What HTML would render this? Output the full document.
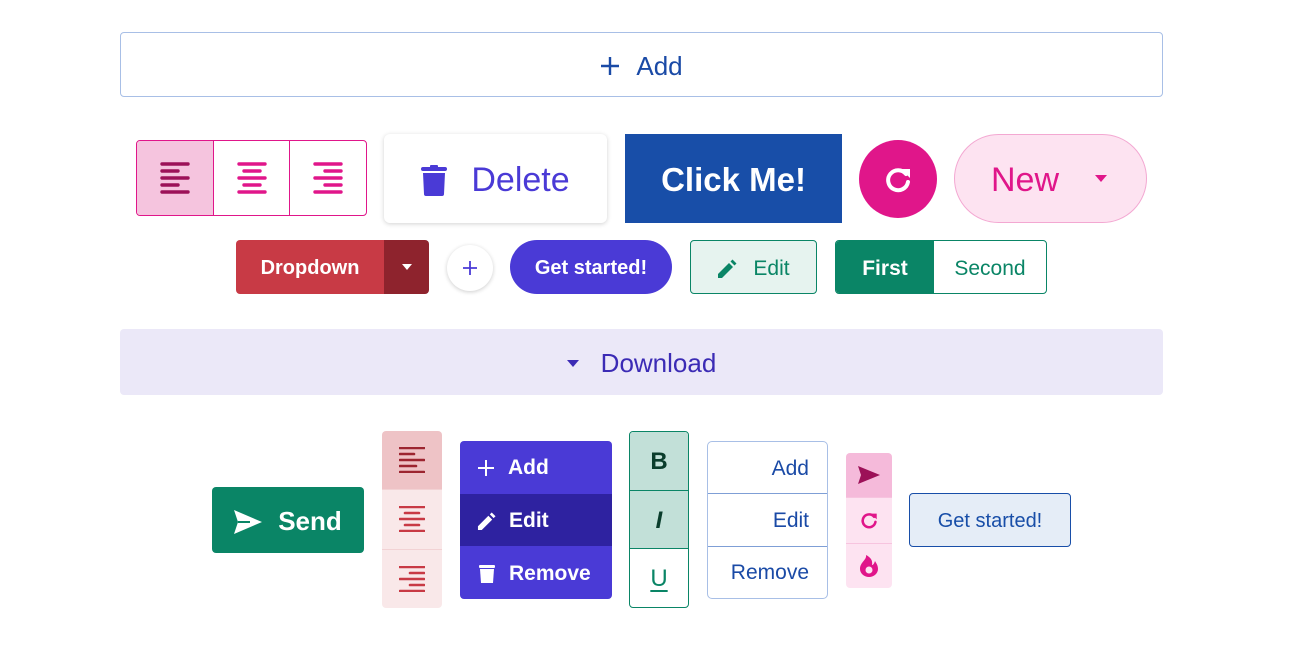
<!DOCTYPE html>
<html><head><meta charset="utf-8"><style>
*{box-sizing:border-box;margin:0;padding:0}
body{width:1300px;height:650px;background:#fff;font-family:"Segoe UI","Liberation Sans",sans-serif;position:relative;overflow:hidden}
.a{position:absolute;display:flex;align-items:center;justify-content:center;padding-top:3px}
.col{position:absolute;display:flex;flex-direction:column;overflow:hidden}
.col>div{flex:1;display:flex;align-items:center;justify-content:center;padding-top:2px}
.row{position:absolute;display:flex;overflow:hidden}
.row>div{display:flex;align-items:center;justify-content:center;padding-top:3px}
</style></head><body>

<div class="a" style="left:120px;top:32px;width:1043px;height:65px;border:1px solid #a8bfe6;border-radius:4px;color:#1a4aa6;font-size:26px;gap:16px">
<svg width="20" height="20" viewBox="0 0 20 20"><path d="M10 1v18M1 10h18" stroke="#1a4aa6" stroke-width="2.4"/></svg><span>Add</span></div>

<div class="row" style="left:136px;top:140px;width:231px;height:76px;border:1px solid #e0168a;border-radius:4px">
<div style="width:77px;background:#f5c4de;border-right:1px solid #e0168a;padding:0"><svg width="30" height="32" viewBox="0 0 30 32" stroke="#9c1158" stroke-width="3.4" stroke-linecap="round"><path d="M2 2h26M2 9h16M2 16h26M2 23h16M2 30h26"/></svg></div>
<div style="width:76px;border-right:1px solid #e0168a;padding:0"><svg width="30" height="32" viewBox="0 0 30 32" stroke="#e0168a" stroke-width="3.4" stroke-linecap="round"><path d="M2 2h26M7 9h16M2 16h26M7 23h16M2 30h26"/></svg></div>
<div style="flex:1;padding:0"><svg width="30" height="32" viewBox="0 0 30 32" stroke="#e0168a" stroke-width="3.4" stroke-linecap="round"><path d="M2 2h26M12 9h16M2 16h26M12 23h16M2 30h26"/></svg></div>
</div>

<div class="a" style="left:384px;top:134px;width:223px;height:89px;border-radius:6px;box-shadow:0 1px 5px rgba(0,0,0,.18);color:#4a3ad6;font-size:34px;gap:24px">
<svg width="26" height="31" viewBox="0 0 26 31"><rect x="0" y="2" width="26" height="4" rx="2" fill="#4a3ad6"/><rect x="9" y="0" width="8" height="4" rx="1" fill="#4a3ad6"/><path d="M2 8h22l-1 21a2 2 0 0 1-2 2H5a2 2 0 0 1-2-2z" fill="#4a3ad6"/></svg><span>Delete</span></div>

<div class="a" style="left:625px;top:134px;width:217px;height:89px;background:#184ea8;color:#fff;font-size:33px;font-weight:600">Click Me!</div>

<div class="a" style="left:859px;top:140px;width:78px;height:78px;border-radius:50%;background:#e0168a;padding:0">
<svg width="28" height="28" viewBox="0 0 28 28"><path d="M22 9A10 10 0 1 0 24 17" fill="none" stroke="#fff" stroke-width="4" stroke-linecap="round"/><path d="M17 4h9v9z" fill="#fff"/></svg></div>

<div class="a" style="left:954px;top:134px;width:193px;height:89px;border-radius:45px;background:#fde3f1;border:1px solid #f3a8d2;color:#e0168a;font-size:34px;justify-content:flex-start;padding-left:36px">New
<svg style="position:absolute;left:140px;top:40px" width="12" height="7" viewBox="0 0 12 7"><path d="M0 0h12L6 7z" fill="#e0168a"/></svg></div>

<div class="row" style="left:236px;top:240px;width:193px;height:54px;border-radius:4px;color:#fff;font-size:20px;font-weight:600">
<div style="width:148px;background:#c83a45">Dropdown</div><div style="flex:1;background:#8e232d;padding:0"><svg width="10" height="6" viewBox="0 0 10 6"><path d="M0 0h10L5 6z" fill="#fff"/></svg></div></div>

<div class="a" style="left:447px;top:245px;width:46px;height:46px;border-radius:50%;box-shadow:0 1px 4px rgba(0,0,0,.2);padding:0"><svg width="16" height="16" viewBox="0 0 16 16"><path d="M8 1v14M1 8h14" stroke="#4a3ad6" stroke-width="1.8"/></svg></div>

<div class="a" style="left:510px;top:240px;width:162px;height:54px;border-radius:27px;background:#4a3ad6;color:#fff;font-size:20px;font-weight:600">Get started!</div>

<div class="a" style="left:690px;top:240px;width:127px;height:54px;border-radius:4px;background:#e6f3ef;border:1px solid #0a8566;color:#0a8566;font-size:21px;gap:16px">
<svg width="20" height="20" viewBox="0 0 20 20"><path d="M1 15l11-11 4 4-11 11H1z M13.5 2.5l2-2 4 4-2 2z" fill="#0a8566"/></svg><span>Edit</span></div>

<div class="row" style="left:835px;top:240px;width:212px;height:54px;border-radius:4px;border:1px solid #0a8566;font-size:21px">
<div style="width:98px;background:#0a8566;color:#fff;font-weight:600">First</div><div style="flex:1;color:#0a8566">Second</div></div>

<div class="a" style="left:120px;top:329px;width:1043px;height:66px;border-radius:4px;background:#ebe8f8;color:#3b2bb5;font-size:26px;gap:22px">
<svg width="12" height="7" viewBox="0 0 12 7"><path d="M0 0h12L6 7z" fill="#3b2bb5"/></svg><span>Download</span></div>

<div class="a" style="left:212px;top:487px;width:152px;height:66px;border-radius:4px;background:#0a8566;color:#fff;font-size:26px;font-weight:600;gap:16px">
<svg width="28" height="24" viewBox="0 0 28 24"><path d="M0 0l28 12L0 24l4-12z" fill="#fff"/><path d="M4 12h12" stroke="#0a8566" stroke-width="2"/></svg><span>Send</span></div>

<div class="col" style="left:382px;top:431px;width:60px;height:177px;border-radius:4px">
<div style="background:#eec3c6;border-bottom:1px solid #f2d2d4;padding:0"><svg width="26" height="26" viewBox="0 0 26 26" stroke="#9c2530" stroke-width="2.6" stroke-linecap="round"><path d="M1 1h24M1 7h14M1 13h24M1 19h16M1 25h24"/></svg></div>
<div style="background:#f9e8e9;border-bottom:1px solid #f2d2d4;padding:0"><svg width="26" height="26" viewBox="0 0 26 26" stroke="#c83a45" stroke-width="2.6" stroke-linecap="round"><path d="M1 1h24M6 7h14M1 13h24M6 19h14M1 25h24"/></svg></div>
<div style="background:#f9e8e9;padding:0"><svg width="26" height="26" viewBox="0 0 26 26" stroke="#c83a45" stroke-width="2.6" stroke-linecap="round"><path d="M1 1h24M11 7h14M1 13h24M11 19h14M1 25h24"/></svg></div>
</div>

<div class="col" style="left:460px;top:441px;width:152px;height:158px;border-radius:4px;background:#4a3ad6;color:#fff;font-size:21px;font-weight:600">
<div style="justify-content:flex-start;padding-left:18px;gap:14px"><svg width="16" height="16" viewBox="0 0 16 16"><path d="M8 0v16M0 8h16" stroke="#fff" stroke-width="2"/></svg>Add</div>
<div style="justify-content:flex-start;padding-left:17px;gap:13px;background:#2e22a0"><svg width="19" height="19" viewBox="0 0 20 20"><path d="M1 15l11-11 4 4-11 11H1z M13.5 2.5l2-2 4 4-2 2z" fill="#fff"/></svg>Edit</div>
<div style="justify-content:flex-start;padding-left:19px;gap:14px"><svg width="16" height="20" viewBox="0 0 16 20"><rect x="0" y="1" width="16" height="3" rx="1" fill="#fff"/><path d="M1 5h14l-1 14H2z" fill="#fff"/></svg>Remove</div>
</div>

<div class="col" style="left:629px;top:431px;width:60px;height:177px;border-radius:4px;border:1px solid #0a8566;font-size:24px">
<div style="background:#c2e0d8;border-bottom:1px solid #0a8566;color:#0a3d2c;font-weight:700">B</div>
<div style="background:#c2e0d8;border-bottom:1px solid #0a8566;color:#0a3d2c;font-weight:700;font-style:italic">I</div>
<div style="color:#0a8566;text-decoration:underline;text-underline-offset:4px">U</div>
</div>

<div class="col" style="left:707px;top:441px;width:121px;height:158px;border-radius:5px;border:1px solid #a8bfe6;color:#1a4aa6;font-size:21px">
<div style="justify-content:flex-end;padding-right:18px;border-bottom:1px solid #7f9fd6">Add</div>
<div style="justify-content:flex-end;padding-right:18px;border-bottom:1px solid #7f9fd6">Edit</div>
<div style="justify-content:flex-end;padding-right:18px">Remove</div>
</div>

<div class="col" style="left:846px;top:453px;width:46px;height:135px;border-radius:4px">
<div style="background:#f5bada;padding:0"><svg width="22" height="18" viewBox="0 0 22 18"><path d="M0 0l22 9L0 18l3-9z" fill="#9c1158"/></svg></div>
<div style="background:#fde3f1;border-top:1px solid #f7c4df;border-bottom:1px solid #f7c4df;padding:0"><svg width="18" height="18" viewBox="0 0 28 28"><path d="M22 9A10 10 0 1 0 24 17" fill="none" stroke="#e0168a" stroke-width="4" stroke-linecap="round"/><path d="M17 4h9v9z" fill="#e0168a"/></svg></div>
<div style="background:#fde3f1;padding:0"><svg width="18" height="22" viewBox="0 0 18 22"><path d="M6 0c1 5-6 7-6 14a9 8 0 0 0 18 0c0-4-2-6-3-8-1 3-2 4-3 4 1-5-2-8-6-10z" fill="#e0168a"/><circle cx="9" cy="15" r="3.5" fill="#fde3f1"/></svg></div>
</div>

<div class="a" style="left:909px;top:493px;width:162px;height:54px;border-radius:4px;background:#e5edf7;border:1px solid #184ea8;color:#184ea8;font-size:20px">Get started!</div>

</body></html>
